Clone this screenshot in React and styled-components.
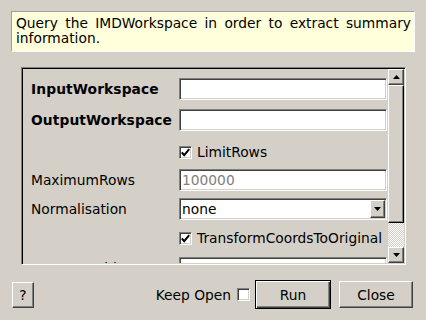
import React from "react";
import styled, { createGlobalStyle, css } from "styled-components";

const GlobalStyle = createGlobalStyle`
  html, body { margin: 0; padding: 0; }
  body {
    background: #d4d0c8;
    font-family: "DejaVu Sans", "Noto Sans", sans-serif;
    font-size: 13.8px;
    color: #000;
  }
`;

// bevels, classic look
const sunken = css`
  border: 1px solid;
  border-color: #808080 #fff #fff #808080;
  box-shadow: inset 1px 1px #404040, inset -1px -1px #d4d0c8;
`;

const raised = css`
  border: 1px solid;
  border-color: #fff #404040 #404040 #fff;
  box-shadow: inset -1px -1px #808080;
  background: #d4d0c8;
`;

const Dialog = styled.div`
  width: 426px;
  height: 320px;
  box-sizing: border-box;
  padding-top: 11px;
  display: flex;
  flex-direction: column;
`;

const Description = styled.div`
  margin-left: 11px;
  width: 404px;
  height: 41px;
  box-sizing: border-box;
  border: 1px solid;
  border-color: #a0a0a0 #fff #fff #a0a0a0;
  background: #ffffdc;
  padding: 4px 3px 5px 4px;
  line-height: 15px;
  text-align: justify;
`;

const Frame = styled.div`
  margin: 15px 0 0 21px;
  width: 385px;
  height: 198px;
  box-sizing: border-box;
  border: 1px solid;
  border-color: #808080 #fff #fff #808080;
  box-shadow: inset 1px 1px #000, inset -1px -1px #d4d0c8;
  padding: 1px;
  display: flex;
`;

const Content = styled.div`
  flex: 1;
  overflow: hidden;
  padding: 9px 1px 0 8px;
  display: flex;
  flex-direction: column;
`;

const Row = styled.div`
  flex: none;
  margin-top: ${(p) => p.$gap || 0}px;
  height: 22px;
  display: grid;
  grid-template-columns: 148px 208px;
  align-items: center;
`;

const Label = styled.span`
  font-weight: ${(p) => (p.$bold ? "bold" : "normal")};
  letter-spacing: ${(p) => (p.$bold ? "0.1px" : "0")};
  white-space: nowrap;
`;

const Field = styled.div`
  ${sunken};
  height: 22px;
  box-sizing: border-box;
  background: #fff;
  padding: 0 0 0 2px;
  display: flex;
  align-items: center;
  color: ${(p) => (p.$dim ? "#808080" : "#000")};
`;

const ComboText = styled.span`
  flex: 1;
`;

const ComboArrow = styled.div`
  ${raised};
  width: 15px;
  height: 18px;
  box-sizing: border-box;
  margin-right: 1px;
  display: flex;
  align-items: center;
  justify-content: center;
`;

const CheckLine = styled.label`
  grid-column: 2;
  display: flex;
  align-items: center;
  gap: 5px;
  white-space: nowrap;
`;

const Box = styled.span`
  ${sunken};
  width: 13px;
  height: 13px;
  box-sizing: border-box;
  background: #fff;
  display: inline-flex;
  align-items: center;
  justify-content: center;
  flex: none;
`;

const ScrollBar = styled.div`
  width: 16px;
  display: flex;
  flex-direction: column;
`;

const ScrollButton = styled.div`
  ${raised};
  height: 16px;
  box-sizing: border-box;
  display: flex;
  align-items: center;
  justify-content: center;
  flex: none;
`;

const Thumb = styled.div`
  ${raised};
  box-shadow: inset -1px -1px #808080, inset 1px 1px #d4d0c8;
  border-right-color: #000;
  border-bottom-color: #000;
  height: 138px;
  box-sizing: border-box;
  flex: none;
`;

const Trough = styled.div`
  flex: 1;
  background: repeating-conic-gradient(#fff 0 25%, #d4d0c8 0 50%) 0 0 / 2px 2px;
`;

const Footer = styled.div`
  margin-top: 15px;
  height: 29px;
  padding: 0 13px 0 12px;
  display: flex;
  align-items: center;
`;

const Button = styled.button`
  ${raised};
  font: inherit;
  color: #000;
  width: ${(p) => p.$w}px;
  height: ${(p) => p.$h || 27}px;
  padding: 0;
  box-sizing: border-box;
  ${(p) =>
    p.$default &&
    css`
      height: 29px;
      outline: none;
      border: 1px solid #000;
      box-shadow: inset 1px 1px #fff, inset -1px -1px #404040, inset -2px -2px #808080;
    `}
`;

const KeepOpen = styled.label`
  margin-left: auto;
  display: flex;
  align-items: center;
  gap: 6px;
  margin-right: 5px;
`;

const Arrow = ({ up }) => (
  <svg width="7" height="4" viewBox="0 0 7 4">
    <polygon points={up ? "0,4 7,4 3.5,0" : "0,0 7,0 3.5,4"} fill="#000" />
  </svg>
);

const Tick = () => (
  <svg width="9" height="9" viewBox="0 0 9 9">
    <polyline points="0.8,4.3 3.2,7.2 8.2,1.2" fill="none" stroke="#000" strokeWidth="2" />
  </svg>
);

const CheckBox = ({ checked }) => <Box>{checked && <Tick />}</Box>;

export default function App() {
  return (
    <>
      <GlobalStyle />
      <Dialog>
        <Description>
          Query the IMDWorkspace in order to extract summary information.
        </Description>
        <Frame>
          <Content>
            <Row>
              <Label $bold>InputWorkspace</Label>
              <Field />
            </Row>
            <Row $gap={9}>
              <Label $bold>OutputWorkspace</Label>
              <Field />
            </Row>
            <Row $gap={10}>
              <CheckLine>
                <CheckBox checked />
                LimitRows
              </CheckLine>
            </Row>
            <Row $gap={6}>
              <Label>MaximumRows</Label>
              <Field $dim>100000</Field>
            </Row>
            <Row $gap={7}>
              <Label>Normalisation</Label>
              <Field>
                <ComboText>none</ComboText>
                <ComboArrow>
                  <Arrow />
                </ComboArrow>
              </Field>
            </Row>
            <Row $gap={7}>
              <CheckLine>
                <CheckBox checked />
                TransformCoordsToOriginal
              </CheckLine>
            </Row>
            <Row $gap={8}>
              <Label>BoxDataTable</Label>
              <Field />
            </Row>
          </Content>
          <ScrollBar>
            <ScrollButton>
              <Arrow up />
            </ScrollButton>
            <Thumb />
            <Trough />
            <ScrollButton>
              <Arrow />
            </ScrollButton>
          </ScrollBar>
        </Frame>
        <Footer>
          <Button $w={22} $h={26}>?</Button>
          <KeepOpen>
            Keep Open
            <CheckBox />
          </KeepOpen>
          <Button $w={76} $default>Run</Button>
          <Button $w={74} style={{ marginLeft: 8 }}>Close</Button>
        </Footer>
      </Dialog>
    </>
  );
}
